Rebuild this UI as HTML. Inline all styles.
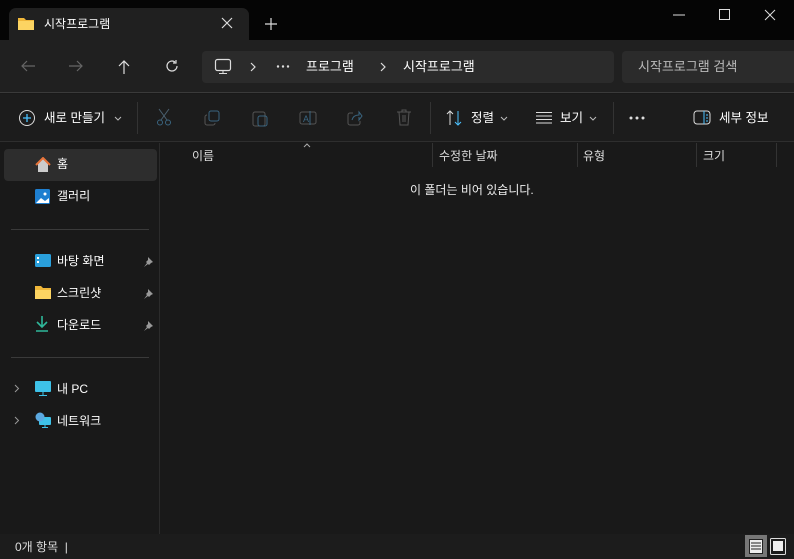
<!DOCTYPE html>
<html><head><meta charset="utf-8"><style>
*{margin:0;padding:0;box-sizing:border-box}
body{width:794px;height:559px;background:#191919;font-family:"Liberation Sans","Noto Sans CJK KR",sans-serif;color:#fff;position:relative;overflow:hidden;font-size:12px}
.abs{position:absolute}
.t{white-space:nowrap;line-height:14px}
</style></head><body>
<div class="abs" style="left:0;top:0;width:794px;height:40px;background:#050505"></div>
<div class="abs" style="left:9px;top:8px;width:240px;height:33px;background:#202020;border-radius:7px 7px 0 0"></div>
<svg class="abs" style="left:17px;top:15px" width="18" height="16"><path d="M1 3h6l2 2h8v10H1z" fill="#f0b73a"/><path d="M1 6h16v9H1z" fill="#fcd462"/></svg>
<div class="abs t" style="left:44px;top:17px;font-size:12px">시작프로그램</div>
<svg class="abs" style="left:221px;top:17px" width="12" height="12"><path d="M1 1L11 11M11 1L1 11" stroke="#ddd" stroke-width="1.2"/></svg>
<svg class="abs" style="left:265px;top:18px" width="12" height="12"><path d="M6 0v12M0 6h12" stroke="#ddd" stroke-width="1.2"/></svg>
<svg class="abs" style="left:673px;top:14px" width="12" height="2"><path d="M0 1h12" stroke="#ddd"/></svg>
<svg class="abs" style="left:719px;top:9px" width="11" height="11"><rect x=".5" y=".5" width="10" height="10" fill="none" stroke="#ddd"/></svg>
<svg class="abs" style="left:764px;top:9px" width="12" height="12"><path d="M1 1L11 11M11 1L1 11" stroke="#ddd"/></svg>

<div class="abs" style="left:0;top:40px;width:794px;height:53px;background:#202020;border-bottom:1px solid #3a3a3a"></div>
<svg class="abs" style="left:20px;top:59px" width="16" height="14"><path d="M15 7H2M7 2L2 7l5 5" stroke="#666" fill="none" stroke-width="1.2"/></svg>
<svg class="abs" style="left:68px;top:59px" width="16" height="14"><path d="M1 7h13M9 2l5 5-5 5" stroke="#666" fill="none" stroke-width="1.2"/></svg>
<svg class="abs" style="left:117px;top:59px" width="14" height="16"><path d="M7 15V2M2 7l5-5 5 5" stroke="#ddd" fill="none" stroke-width="1.2"/></svg>
<svg class="abs" style="left:165px;top:59px" width="14" height="14"><path d="M12 7a5 5 0 1 1-2-4M11 1v3H8" stroke="#ddd" fill="none" stroke-width="1.2"/></svg>
<div class="abs" style="left:202px;top:51px;width:412px;height:32px;background:#2b2b2b;border-radius:4px"></div>
<svg class="abs" style="left:214px;top:58px" width="18" height="17"><rect x="1.5" y="1.5" width="15" height="11" rx="2" fill="none" stroke="#ddd" stroke-width="1.2"/><path d="M9 13v2M5 15.5h8" stroke="#ddd"/></svg>
<svg class="abs" style="left:250px;top:62px" width="6" height="10"><path d="M1 1l4 4-4 4" stroke="#ddd" fill="none" stroke-width="1.2"/></svg>
<svg class="abs" style="left:276px;top:65px" width="14" height="3"><circle cx="2" cy="1.5" r="1.2" fill="#ddd"/><circle cx="7" cy="1.5" r="1.2" fill="#ddd"/><circle cx="12" cy="1.5" r="1.2" fill="#ddd"/></svg>
<div class="abs t" style="left:306px;top:60px;font-size:13px">프로그램</div>
<svg class="abs" style="left:380px;top:62px" width="6" height="10"><path d="M1 1l4 4-4 4" stroke="#ddd" fill="none" stroke-width="1.2"/></svg>
<div class="abs t" style="left:403px;top:60px;font-size:13px">시작프로그램</div>
<div class="abs" style="left:622px;top:51px;width:172px;height:32px;background:#2b2b2b;border-radius:4px 0 0 4px"></div>
<div class="abs t" style="left:638px;top:60px;color:#bbb;font-size:13px">시작프로그램 검색</div>

<div class="abs" style="left:0;top:94px;width:794px;height:48px;background:#1c1c1c;border-bottom:1px solid #2e2e2e"></div>
<svg class="abs" style="left:18px;top:109px" width="18" height="18"><circle cx="9" cy="9" r="7.5" fill="none" stroke="#ddd"/><path d="M9 5v8M5 9h8" stroke="#4cc2ff" stroke-width="1.3"/></svg>
<div class="abs t" style="left:44px;top:111px;font-size:12.5px">새로 만들기</div>
<svg class="abs" style="left:114px;top:116px" width="8" height="5"><path d="M1 1l3 3 3-3" stroke="#bbb" fill="none"/></svg>
<div class="abs" style="left:137px;top:102px;width:1px;height:32px;background:#333"></div>
<svg class="abs" style="left:156px;top:108px" width="16" height="18"><path d="M3 1l8 11M13 1L5 12" stroke="#4a6070" fill="none"/><circle cx="4" cy="14.5" r="2.5" fill="none" stroke="#3a6580"/><circle cx="12" cy="14.5" r="2.5" fill="none" stroke="#3a6580"/></svg>
<svg class="abs" style="left:204px;top:110px" width="16" height="16"><rect x="5" y="1" width="10" height="10" rx="2" fill="none" stroke="#3a6580"/><path d="M3 5a2 2 0 0 0-2 2v6a2 2 0 0 0 2 2h6a2 2 0 0 0 2-2" fill="none" stroke="#555"/></svg>
<svg class="abs" style="left:252px;top:109px" width="16" height="18"><rect x="1" y="3" width="12" height="14" rx="2" fill="none" stroke="#555"/><rect x="6" y="7" width="9" height="10" rx="2" fill="none" stroke="#3a6580"/></svg>
<svg class="abs" style="left:299px;top:110px" width="18" height="16"><rect x="1" y="2" width="16" height="12" rx="2" fill="none" stroke="#555"/><text x="4" y="12" font-size="9" fill="#3a6580" font-family="Liberation Sans">A</text><path d="M11 1v14" stroke="#3a6580"/></svg>
<svg class="abs" style="left:347px;top:110px" width="16" height="16"><path d="M6 3H3a2 2 0 0 0-2 2v8a2 2 0 0 0 2 2h8a2 2 0 0 0 2-2v-2" fill="none" stroke="#555"/><path d="M5 10c1-4 4-5 7-5V2l3 4-3 4V7" fill="none" stroke="#3a6580"/></svg>
<svg class="abs" style="left:396px;top:109px" width="16" height="18"><path d="M1 3h14M6 3V1h4v2M3 3l1 13h8l1-13M7 6v7M9 6v7" fill="none" stroke="#555"/></svg>
<div class="abs" style="left:430px;top:102px;width:1px;height:32px;background:#333"></div>
<svg class="abs" style="left:446px;top:110px" width="18" height="16"><path d="M4 15V1M1 4l3-3 3 3" stroke="#ddd" fill="none"/><path d="M12 1v14M9 12l3 3 3-3" stroke="#4cc2ff" fill="none"/></svg>
<div class="abs t" style="left:471px;top:111px;font-size:12.5px">정렬</div>
<svg class="abs" style="left:500px;top:116px" width="8" height="5"><path d="M1 1l3 3 3-3" stroke="#bbb" fill="none"/></svg>
<svg class="abs" style="left:535px;top:111px" width="18" height="13"><path d="M1 1.5h16M1 5h16M1 8.5h16M1 12h16" stroke="#ddd"/></svg>
<div class="abs t" style="left:560px;top:111px;font-size:12.5px">보기</div>
<svg class="abs" style="left:589px;top:116px" width="8" height="5"><path d="M1 1l3 3 3-3" stroke="#bbb" fill="none"/></svg>
<div class="abs" style="left:613px;top:102px;width:1px;height:32px;background:#333"></div>
<svg class="abs" style="left:629px;top:116px" width="18" height="4"><circle cx="2" cy="2" r="1.5" fill="#ddd"/><circle cx="8" cy="2" r="1.5" fill="#ddd"/><circle cx="14" cy="2" r="1.5" fill="#ddd"/></svg>
<svg class="abs" style="left:693px;top:110px" width="18" height="15"><rect x="1" y="1" width="16" height="13" rx="3" fill="none" stroke="#ddd"/><path d="M11 1v13M13 5h2M13 8h2M13 11h2" stroke="#4cc2ff"/></svg>
<div class="abs t" style="left:719px;top:111px;font-size:12.5px">세부 정보</div>

<div class="abs" style="left:159px;top:143px;width:1px;height:391px;background:#2b2b2b"></div>
<div class="abs" style="left:4px;top:149px;width:153px;height:32px;background:#2d2d2d;border-radius:4px"></div>
<svg class="abs" style="left:35px;top:157px" width="16" height="16"><path d="M3 7v8h10V7L8 2z" fill="#ccc"/><path d="M1 8L8 1l7 7" fill="none" stroke="#e8743a" stroke-width="2"/></svg>
<div class="abs t" style="left:57px;top:157px">홈</div>
<svg class="abs" style="left:35px;top:189px" width="16" height="16"><rect x="0" y="0" width="15" height="15" rx="1.5" fill="#1e7fd0"/><path d="M1 14l5-5 4 3 4-3v5z" fill="#fff"/><circle cx="10" cy="5" r="1.5" fill="#fff"/></svg>
<div class="abs t" style="left:57px;top:189px">갤러리</div>
<div class="abs" style="left:11px;top:229px;width:138px;height:1px;background:#3a3a3a"></div>
<svg class="abs" style="left:35px;top:254px" width="16" height="14"><rect x="0" y="0" width="16" height="13" rx="1.5" fill="#2aa0dc"/><rect x="2" y="3" width="2" height="2" fill="#fff"/><rect x="2" y="7" width="2" height="2" fill="#fff"/></svg>
<div class="abs t" style="left:57px;top:254px">바탕 화면</div>
<svg class="abs" style="left:143px;top:256px" width="11" height="11"><path d="M5 1l5 5-2 1-2 2-1-1-4 3 3-4-1-1 2-2z" fill="#999"/></svg>
<svg class="abs" style="left:35px;top:285px" width="16" height="14"><path d="M0 1h6l2 2h8v11H0z" fill="#f0b73a"/><path d="M0 5h16v9H0z" fill="#fcd462"/></svg>
<div class="abs t" style="left:57px;top:286px">스크린샷</div>
<svg class="abs" style="left:143px;top:288px" width="11" height="11"><path d="M5 1l5 5-2 1-2 2-1-1-4 3 3-4-1-1 2-2z" fill="#999"/></svg>
<svg class="abs" style="left:35px;top:316px" width="14" height="16"><path d="M7 0v11M2 6l5 5 5-5M1 15h12" stroke="#2fb89a" stroke-width="1.6" fill="none"/></svg>
<div class="abs t" style="left:57px;top:318px">다운로드</div>
<svg class="abs" style="left:143px;top:320px" width="11" height="11"><path d="M5 1l5 5-2 1-2 2-1-1-4 3 3-4-1-1 2-2z" fill="#999"/></svg>
<div class="abs" style="left:11px;top:357px;width:138px;height:1px;background:#3a3a3a"></div>
<svg class="abs" style="left:14px;top:384px" width="6" height="9"><path d="M1 1l3.5 3.5L1 8" stroke="#999" fill="none"/></svg>
<svg class="abs" style="left:35px;top:381px" width="16" height="15"><rect x="0" y="0" width="16" height="11" rx="1" fill="#3ec2e8"/><path d="M8 11v3M4 14.5h8" stroke="#3ec2e8"/></svg>
<div class="abs t" style="left:57px;top:382px">내 PC</div>
<svg class="abs" style="left:14px;top:416px" width="6" height="9"><path d="M1 1l3.5 3.5L1 8" stroke="#999" fill="none"/></svg>
<svg class="abs" style="left:35px;top:412px" width="16" height="16"><rect x="4" y="5" width="12" height="8" rx="1" fill="#3ec2e8"/><circle cx="5" cy="5" r="4.5" fill="#5ba8e0"/><path d="M10 13v2M7 15.5h6" stroke="#3ec2e8"/></svg>
<div class="abs t" style="left:57px;top:414px">네트워크</div>

<svg class="abs" style="left:303px;top:143px" width="8" height="5"><path d="M1 4l3-3 3 3" stroke="#aaa" fill="none"/></svg>
<div class="abs t" style="left:192px;top:149px;color:#ddd">이름</div>
<div class="abs" style="left:432px;top:143px;width:1px;height:24px;background:#333"></div>
<div class="abs t" style="left:439px;top:149px;color:#ddd">수정한 날짜</div>
<div class="abs" style="left:577px;top:143px;width:1px;height:24px;background:#333"></div>
<div class="abs t" style="left:583px;top:149px;color:#ddd">유형</div>
<div class="abs" style="left:696px;top:143px;width:1px;height:24px;background:#333"></div>
<div class="abs t" style="left:703px;top:149px;color:#ddd">크기</div>
<div class="abs" style="left:776px;top:143px;width:1px;height:24px;background:#333"></div>
<div class="abs t" style="left:410px;top:183px;color:#eee">이 폴더는 비어 있습니다.</div>

<div class="abs" style="left:0;top:534px;width:794px;height:25px;background:#1c1c1c"></div>
<div class="abs t" style="left:15px;top:540px;color:#ddd">0개 항목 &nbsp;|</div>
<div class="abs" style="left:745px;top:535px;width:22px;height:22px;background:#777"></div>
<svg class="abs" style="left:749px;top:539px" width="14" height="15"><rect x=".5" y=".5" width="13" height="14" fill="#eee" stroke="#222"/><path d="M2 4h10M2 7h10M2 10h10" stroke="#222"/></svg>
<svg class="abs" style="left:770px;top:538px" width="16" height="17"><rect x=".5" y=".5" width="15" height="16" rx="1" fill="none" stroke="#ddd"/><rect x="3" y="3" width="10" height="10" fill="#eee"/></svg>
</body></html>
